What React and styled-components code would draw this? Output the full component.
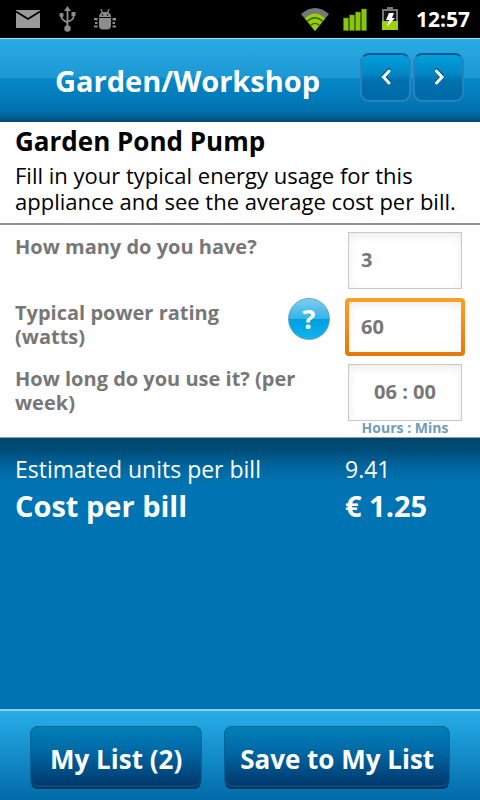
import React, { useState } from 'react';
import styled, { createGlobalStyle } from 'styled-components';

const GlobalStyle = createGlobalStyle`
  * {
    box-sizing: border-box;
  }
  body {
    margin: 0;
    background: #0074b2;
    font-family: 'Open Sans', 'Noto Sans', sans-serif;
  }
`;

const Screen = styled.div`
  display: flex;
  flex-direction: column;
  min-height: 100vh;
`;

const StatusBar = styled.div`
  display: flex;
  align-items: center;
  justify-content: space-between;
  height: 38px;
  padding: 0 10px 0 15px;
  background: #000;
`;

const StatusGroup = styled.div`
  display: flex;
  align-items: center;
  gap: ${(props) => props.$gap}px;
`;

const Clock = styled.time`
  margin-left: 3px;
  color: #fff;
  font-size: 21px;
  font-weight: 700;
  line-height: 38px;
`;

const Header = styled.header`
  display: flex;
  align-items: center;
  justify-content: space-between;
  height: 84px;
  padding: 0 16px 0 55px;
  border-top: 1px solid #a9dcf3;
  background: linear-gradient(#2aabe4 0%, #1c98d4 46%, #0688c8 48%, #0071ae 88%, #00588a 96%, #004b77 100%);
`;

const HeaderTitle = styled.h1`
  margin: 0;
  color: #fff;
  font-size: 29px;
  font-weight: 700;
  line-height: 36px;
`;

const Pager = styled.nav`
  display: flex;
  gap: 2px;
  padding-bottom: 6px;
`;

const PagerButton = styled.button`
  display: flex;
  align-items: center;
  justify-content: center;
  width: 51px;
  height: 49px;
  padding: 0 0 2px;
  border: 2px solid #2a82bd;
  border-top-color: #07598b;
  border-radius: 9px;
  background: linear-gradient(#00a0dc, #0086c4 42%, #0070ae 56%, #006aa7) padding-box;
  cursor: pointer;
`;

const Intro = styled.section`
  padding: 3px 15px 9px;
  border-bottom: 2px solid #8f8f8f;
  background: #fff;
  color: #000;
`;

const ApplianceName = styled.h2`
  margin: 0 0 5px;
  font-size: 26px;
  font-weight: 700;
  line-height: 32px;
`;

const Description = styled.p`
  margin: 0;
  font-size: 22px;
  line-height: 26px;
`;

const Form = styled.form`
  display: grid;
  gap: 8px;
  padding: 7px 15px 3px;
  border-bottom: 1px solid #8f9ba1;
  background: #fff;
`;

const Row = styled.div`
  display: flex;
  align-items: flex-start;
`;

const Label = styled.label`
  flex: 1;
  padding-top: 3px;
  color: #777;
  font-size: 20px;
  font-weight: 700;
  line-height: 24px;
`;

const HelpButton = styled.button`
  width: 42px;
  height: 42px;
  margin: 0 15px 0 10px;
  padding: 0;
  border: 1px solid #6aa5c4;
  border-radius: 50%;
  background: linear-gradient(#7ccdf0, #35b4e8 49%, #009fe0 51%, #10b4ee);
  color: #fff;
  font: 700 27px/38px 'Open Sans', 'Noto Sans', sans-serif;
  cursor: pointer;
`;

const Field = styled.div`
  width: 120px;
`;

const Frame = styled.div`
  height: 58px;
  padding: ${(props) => (props.$active ? '4px' : '0 3px 1px')};
  border-radius: 4px;
  background: ${(props) => (props.$active ? 'linear-gradient(#fba026, #e8760c)' : 'none')};
`;

const Input = styled.input`
  display: block;
  width: 100%;
  height: 100%;
  padding: 0 12px 2px;
  border: ${(props) => (props.$active ? '0' : '1px solid #c9c9cd')};
  outline: none;
  background: #fff;
  box-shadow: inset 0 3px 8px #ececec;
  color: #777;
  font: 700 20px/24px 'Open Sans', 'Noto Sans', sans-serif;
  text-align: ${(props) => props.$align || 'left'};
`;

const Hint = styled.small`
  display: block;
  color: #6f9cb9;
  font-size: 14px;
  font-weight: 700;
  line-height: 12px;
  text-align: center;
`;

const Results = styled.dl`
  flex: 1;
  margin: 0;
  padding: 15px 15px;
  background: linear-gradient(#00456b, #004d78 12px, #0068a1 30px, #0074b2 46px);
  color: #fff;
`;

const Result = styled.div`
  display: flex;
  justify-content: space-between;
  font-size: ${(props) => (props.$total ? 29 : 23)}px;
  font-weight: ${(props) => (props.$total ? 700 : 400)};
  line-height: ${(props) => (props.$total ? 42 : 32)}px;

  dd {
    width: 120px;
    margin: 0;
  }
`;

const Footer = styled.footer`
  display: flex;
  gap: 22px;
  height: 91px;
  padding: 15px 30px 11px;
  border-top: 2px solid #92d2f0;
  background: linear-gradient(#2bade5, #21a4e0 14%, #006ba8);
`;

const ActionButton = styled.button`
  flex: ${(props) => props.$grow} 1 0;
  padding: 4px 0 0;
  border: 1px solid #086496;
  border-bottom: 2px solid #00345f;
  border-radius: 8px;
  background: linear-gradient(#0080b8, #006aa6 38%, #00366b);
  box-shadow: inset 0 -2px 0 #0c4c7d;
  color: #fff;
  font: 700 26px/32px 'Open Sans', 'Noto Sans', sans-serif;
  white-space: nowrap;
  cursor: pointer;
`;

const MailIcon = () => (
  <svg width="26" height="18" viewBox="0 0 26 18">
    <path fill="#999" d="M1 0h24v18H1z" />
    <path fill="none" stroke="#000" strokeWidth="1.800" d="M1 1.500 13 9l12-7.500" />
  </svg>
);

const UsbIcon = () => (
  <svg width="17" height="26" viewBox="0 0 17 26">
    <g fill="none" stroke="#8c8c8c" strokeWidth="1.800">
      <path d="M8.500 3v19M2.500 9v2q0 2 2 3l4 3M14.500 8v3q0 2-2 3l-4 2" />
    </g>
    <g fill="#8c8c8c">
      <path d="M8.500 0 12 5H5z" />
      <circle cx="8.500" cy="22.500" r="3.200" />
      <circle cx="2.500" cy="9" r="2.200" />
      <path d="M12.500 6h4v4h-4z" />
    </g>
  </svg>
);

const BugIcon = () => (
  <svg width="22" height="21" viewBox="0 0 22 21">
    <g fill="#8c8c8c">
      <path d="M5 8q0-5 6-5t6 5z" />
      <path d="M5 9h12v7.500q0 4-4 4H9q-4 0-4-4z" />
      <path d="M0 9h3.500v2.500H1.500V11H0zM1 13h2.500v2H1zM0 16.500h3.500v2H0zM18.500 9H22v2.500h-3.500zM18.500 13H21v2h-2.500zM18.500 16.500H22v2h-3.500z" />
    </g>
    <path stroke="#8c8c8c" strokeWidth="1.300" d="M7 0l1.500 4M15 0l-1.500 4" />
    <circle cx="8.500" cy="6" r="0.800" />
    <circle cx="13.500" cy="6" r="0.800" />
  </svg>
);

const WifiIcon = () => (
  <svg width="28" height="23" viewBox="0 0 28 23">
    <path fill="#777" d="M0 6q14-12 28 0L14 23z" />
    <path fill="#97cf0a" d="M4 10.500q10-10 20 0L14 23z" />
    <g fill="none" stroke="#3d6500" strokeWidth="1.200">
      <path d="M6 13.500q8-7.500 16 0M9.500 17.500q4.500-4.500 9 0" />
    </g>
  </svg>
);

const SignalIcon = () => (
  <svg width="24" height="23" viewBox="0 0 24 23">
    <path
      fill="#8bc60a"
      stroke="#4f7d00"
      strokeWidth="0.600"
      d="M.5 10h5v12.500h-5zM6.500 7h5v15.500h-5zM12.500 4h5v18.500h-5zM18.500 1h5v21.500h-5z"
    />
  </svg>
);

const BatteryIcon = () => (
  <svg width="18" height="24" viewBox="0 0 18 24">
    <path fill="#777" d="M6 0h6v2h5v21H1V2h5z" />
    <path fill="#111" d="M3 4h12v11H3z" />
    <path fill="#9bd20d" d="M1 14h16v9H1z" />
    <path fill="#fff" d="M8 6h5l-2 5h3l-8 9 2-7H5z" />
  </svg>
);

const Chevron = ({ d }) => (
  <svg width="14" height="20" viewBox="0 0 14 20" fill="none" strokeWidth="3" strokeLinecap="round">
    <path d={d} stroke="#064a72" transform="translate(0 -1.500)" />
    <path d={d} stroke="#fff" />
  </svg>
);

const App = () => {
  const [active, setActive] = useState('watts');
  const [values, setValues] = useState({ count: '3', watts: '60', time: '06 : 00' });

  const bind = (name) => ({
    id: name,
    value: values[name],
    $active: active === name,
    onFocus: () => setActive(name),
    onChange: (e) => setValues({ ...values, [name]: e.target.value }),
  });

  return (
    <Screen>
      <GlobalStyle />
      <StatusBar>
        <StatusGroup $gap={18}>
          <MailIcon />
          <UsbIcon />
          <BugIcon />
        </StatusGroup>
        <StatusGroup $gap={14}>
          <WifiIcon />
          <SignalIcon />
          <BatteryIcon />
          <Clock>12:57</Clock>
        </StatusGroup>
      </StatusBar>

      <Header>
        <HeaderTitle>Garden/Workshop</HeaderTitle>
        <Pager>
          <PagerButton type="button" aria-label="Previous">
            <Chevron d="M10 4 4.500 10l5.500 6" />
          </PagerButton>
          <PagerButton type="button" aria-label="Next">
            <Chevron d="M4.500 4 10 10l-5.500 6" />
          </PagerButton>
        </Pager>
      </Header>

      <Intro>
        <ApplianceName>Garden Pond Pump</ApplianceName>
        <Description>
          Fill in your typical energy usage for this appliance and see the average cost per bill.
        </Description>
      </Intro>

      <Form onSubmit={(e) => e.preventDefault()}>
        <Row>
          <Label htmlFor="count">How many do you have?</Label>
          <Field>
            <Frame $active={active === 'count'}>
              <Input {...bind('count')} />
            </Frame>
          </Field>
        </Row>
        <Row>
          <Label htmlFor="watts">Typical power rating (watts)</Label>
          <HelpButton type="button" aria-label="Help">?</HelpButton>
          <Field>
            <Frame $active={active === 'watts'}>
              <Input {...bind('watts')} />
            </Frame>
          </Field>
        </Row>
        <Row>
          <Label htmlFor="time">How long do you use it? (per week)</Label>
          <Field>
            <Frame $active={active === 'time'}>
              <Input {...bind('time')} $align="center" />
            </Frame>
            <Hint>Hours : Mins</Hint>
          </Field>
        </Row>
      </Form>

      <Results>
        <Result>
          <dt>Estimated units per bill</dt>
          <dd>9.41</dd>
        </Result>
        <Result $total>
          <dt>Cost per bill</dt>
          <dd>€ 1.25</dd>
        </Result>
      </Results>

      <Footer>
        <ActionButton type="button" $grow={172}>My List (2)</ActionButton>
        <ActionButton type="button" $grow={226}>Save to My List</ActionButton>
      </Footer>
    </Screen>
  );
};

export default App;
